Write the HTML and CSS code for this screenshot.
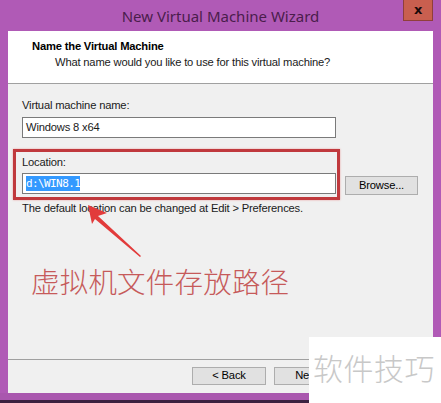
FILE: index.html
```html
<!DOCTYPE html>
<html>
<head>
<meta charset="utf-8">
<link rel="stylesheet" href="styles.css">
</head>
<body>
<div class="window">
  <div class="titlebar">
    <span class="title">New Virtual Machine Wizard</span>
    <div class="close">x</div>
  </div>
  <div class="client">
    <div class="header">
      <div class="h-title">Name the Virtual Machine</div>
      <div class="h-sub">What name would you like to use for this virtual machine?</div>
    </div>
    <div class="body">
      <div class="label">Virtual machine name:</div>
      <div class="field name-field">Windows 8 x64</div>
      <div class="loc-row">
        <div class="loc-box">
          <div class="label">Location:</div>
          <div class="field"><span class="sel">d:\WIN8.1</span></div>
        </div>
        <div class="btn browse">Browse...</div>
      </div>
      <div class="hint">The default location can be changed at Edit &gt; Preferences.</div>
      <div class="annot">虚拟机文件存放路径</div>
    </div>
    <div class="footer">
      <div class="btn">&lt; Back</div>
      <div class="btn">Next &gt;</div>
    </div>
  </div>
  <div class="bottom"></div>
  <svg class="arrow" width="441" height="403" viewBox="0 0 441 403">
    <polygon points="88,205 107,213 98,216 141,256 140,257 95,219 92,224" fill="#e23b3b"/>
  </svg>
  <div class="watermark">软件技巧</div>
</div>
</body>
</html>
```
FILE: styles.css
```css
* { box-sizing: border-box; }
html, body { margin: 0; padding: 0; }
body { width: 441px; height: 403px; overflow: hidden; font-family: "Liberation Sans", Arial, sans-serif; font-size: 11.2px; letter-spacing: -0.18px; color: #1a1a1a; }
.window { position: relative; width: 441px; height: 403px; background: #b05ab6; display: flex; flex-direction: column; }
.titlebar { height: 31px; display: flex; align-items: center; justify-content: center; position: relative; }
.title { font-family: "Noto Sans", sans-serif; font-size: 15px; letter-spacing: 0; color: #4a1d4c; }
.close { position: absolute; left: 403px; top: 0; width: 30px; height: 21px; background: #c95f4f; border: 1px solid #8f3f3b; border-top: none; display: flex; align-items: center; justify-content: center; font-weight: bold; font-size: 13px; color: #1a0a0a; font-family: "DejaVu Sans", sans-serif; line-height: 1; padding-bottom: 2px; }
.client { margin: 0 8px; height: 362px; background: #f0f0f0; display: flex; flex-direction: column; }
.header { background: #fff; height: 53px; border-bottom: 1px solid #a0a0a0; padding: 7px 0 0 24px; }
.h-title { font-weight: bold; color: #000; line-height: 16px; }
.h-sub { padding-left: 23px; line-height: 16px; color: #1a1a1a; }
.body { flex: 1; padding: 14px 0 0 14px; position: relative; }
.label { line-height: 15px; }
.field { width: 314px; height: 21px; background: #fff; border: 1px solid #7a7a7a; margin-top: 4px; padding: 0 0 0 3px; line-height: 19px; }
.name-field { margin-bottom: 11px; }
.loc-row { display: flex; align-items: flex-end; margin-left: -9px; }
.loc-box { border: 3px solid #c0393d; box-shadow: 0 0 2px #e9a3a3; padding: 3px 3px 3px 6px; width: 327px; }
.loc-box .field { margin-top: 3px; }
.sel { background: #3399ff; color: #fff; font-family: "DejaVu Sans Mono", monospace; font-size: 11px; letter-spacing: -0.6px; padding: 1px 0; }
.btn { height: 19px; background: #e1e1e1; border: 1px solid #adadad; display: flex; align-items: center; justify-content: center; color: #000; line-height: 1; }
.browse { width: 73px; margin-left: 5px; margin-bottom: 5px; }
.hint { margin-top: 1px; line-height: 15px; }
.annot { margin-top: 50px; margin-left: 9px; font-family: "Noto Sans CJK SC", sans-serif; font-size: 28.5px; font-weight: 300; color: #c65a5a; line-height: 30px; letter-spacing: 0.2px; }
.footer { height: 34px; border-top: 1px solid #a0a0a0; display: flex; align-items: center; gap: 8px; padding-left: 184px; padding-bottom: 2px; }
.footer .btn { width: 74px; height: 18px; flex: none; }
.bottom { height: 10px; background: linear-gradient(#a957ae 0 7px, #3b2140 7px); }
.arrow { position: absolute; left: 0; top: 0; pointer-events: none; }
.watermark { position: absolute; left: 309px; top: 337px; width: 132px; height: 66px; background: #fff; font-family: "Noto Sans CJK SC", sans-serif; font-size: 30px; color: #c8c8c8; font-weight: 300; padding: 14px 0 0 4px; line-height: 32px; letter-spacing: 0.5px; white-space: nowrap; }
```
